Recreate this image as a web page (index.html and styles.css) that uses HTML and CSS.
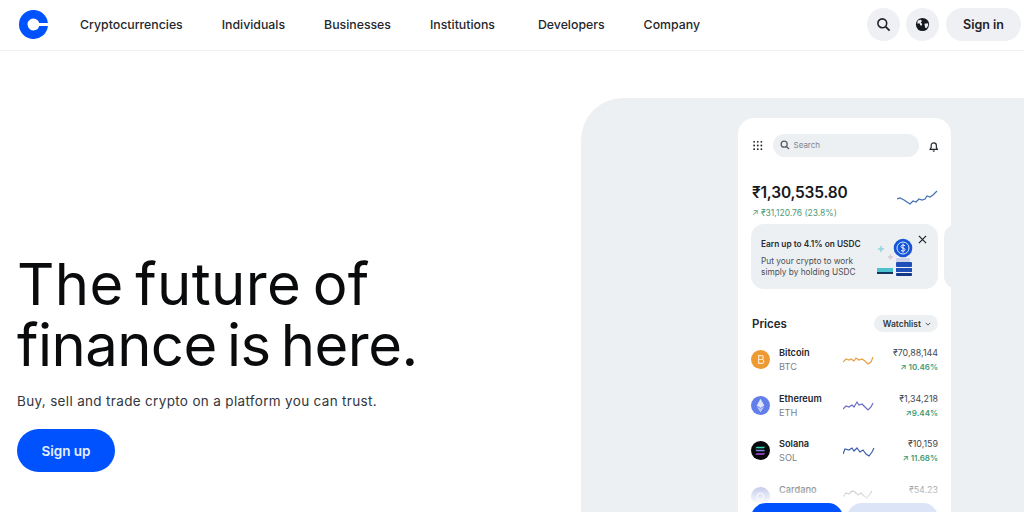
FILE: index.html
```html
<!DOCTYPE html>
<html lang="en">
<head>
    <meta charset="UTF-8">
    <meta name="viewport" content="width=device-width, initial-scale=1.0">
    <title>Coinbase</title>
    <link rel="stylesheet" href="styles.css">
</head>
<body>
    <header class="topbar">
        <svg class="logo" viewBox="0 0 30 30" width="29" height="29">
            <path fill="#0052ff" fill-rule="evenodd" d="M15 0a15 15 0 1 0 14.92 16.5H21a6.2 6.2 0 1 1 0-3h8.92A15 15 0 0 0 15 0z"/>
        </svg>
        <nav class="nav">
            <a class="nav-link">Cryptocurrencies</a>
            <a class="nav-link">Individuals</a>
            <a class="nav-link">Businesses</a>
            <a class="nav-link nav-institutions">Institutions</a>
            <a class="nav-link">Developers</a>
            <a class="nav-link">Company</a>
        </nav>
        <div class="top-actions">
            <button class="round-btn" aria-label="Search">
                <svg viewBox="0 0 16 16" width="15" height="15"><circle cx="6.7" cy="6.7" r="4.7" fill="none" stroke="#1f2329" stroke-width="1.7"/><path d="M10.2 10.2l4.3 4.3" stroke="#1f2329" stroke-width="1.9"/></svg>
            </button>
            <button class="round-btn" aria-label="Language">
                <svg viewBox="0 0 16 16" width="15" height="15"><circle cx="8" cy="8" r="7" fill="#16191f"/><path fill="#eef0f3" d="M3 3.8l3.4-1 1 1.6-1.3 1.5 1.6 1.5-.8 2-1.4-.6-.3-1.9L2.4 7zM10 7.2l3.6-.6.6 2.3-2 3.2-1.3-.6z"/></svg>
            </button>
            <button class="signin-btn">Sign in</button>
        </div>
    </header>

    <main class="hero">
        <section class="hero-copy">
            <h1 class="headline"><span class="line-one">The future of</span><span class="line-two">finance is here.</span></h1>
            <p class="tagline">Buy, sell and trade crypto on a platform you can trust.</p>
            <button class="signup-btn">Sign up</button>
        </section>

        <section class="hero-panel">
            <div class="phone">
                <div class="phone-top">
                    <svg class="grid-icon" viewBox="0 0 11 11" width="11" height="11" fill="#22262c">
                        <circle cx="1.3" cy="1.3" r="1.1"/><circle cx="5.5" cy="1.3" r="1.1"/><circle cx="9.7" cy="1.3" r="1.1"/>
                        <circle cx="1.3" cy="5.5" r="1.1"/><circle cx="5.5" cy="5.5" r="1.1"/><circle cx="9.7" cy="5.5" r="1.1"/>
                        <circle cx="1.3" cy="9.7" r="1.1"/><circle cx="5.5" cy="9.7" r="1.1"/><circle cx="9.7" cy="9.7" r="1.1"/>
                    </svg>
                    <div class="search-box">
                        <svg viewBox="0 0 12 12" width="10" height="10"><circle cx="5" cy="5" r="3.6" fill="none" stroke="#555b65" stroke-width="1.5"/><path d="M7.7 7.7l3.2 3.2" stroke="#555b65" stroke-width="1.6"/></svg>
                        <span>Search</span>
                    </div>
                    <svg class="bell" viewBox="0 0 12 13" width="11" height="12"><path d="M6 1.2a3.3 3.3 0 0 0-3.3 3.3v2.7L1.4 9.6h9.2L9.3 7.2V4.500A3.300 3.300 0 0 0 6 1.200z" fill="none" stroke="#22262c" stroke-width="1.500"/><path d="M4.500 11h3a1.500 1.500 0 0 1-3 0z" fill="#22262c"/></svg>
                </div>

                <div class="balance-row">
                    <div>
                        <div class="balance">₹1,30,535.80</div>
                        <div class="gain">↗ ₹31,120.76 (23.8%)</div>
                    </div>
                    <svg class="balance-chart" viewBox="0 0 42 20" width="42" height="20"><path d="M0 11l3-1 4 2 3 2 3 2 3-3 3 1 3-3 3 1 3-1 2-3 3 1 3-2 4-4" fill="none" stroke="#3f6fb5" stroke-width="1.200"/></svg>
                </div>

                <div class="promo-wrap">
                    <div class="promo">
                        <div class="promo-text">
                            <div class="promo-title">Earn up to 4.1% on USDC</div>
                            <div class="promo-sub">Put your crypto to work<br>simply by holding USDC</div>
                        </div>
                        <svg class="promo-art" viewBox="0 0 46 44" width="46" height="44">
                            <path d="M5 11h6M8 8v6" stroke="#8fd6e0" stroke-width="1.500"/>
                            <path d="M15 19h5M17.500 16.500v5" stroke="#d9c8cc" stroke-width="1.300"/>
                            <circle cx="30" cy="10" r="9.300" fill="#1656d6"/>
                            <circle cx="30" cy="10" r="6" fill="none" stroke="#dbe8ff" stroke-width="1"/>
                            <path d="M32 7.800c-1-1-4-1-4 .8s4 1 4 3-3 1.800-4 .7M30 5.500v9" fill="none" stroke="#fff" stroke-width=".9"/>
                            <rect x="23" y="20" width="14" height="4" fill="#cfd6ea"/>
                            <rect x="4" y="30" width="16" height="4" fill="#4cc3cf"/>
                            <rect x="4" y="34" width="16" height="2" fill="#12365f"/>
                            <rect x="23" y="24" width="16" height="5" rx="1" fill="#1e4fb8"/>
                            <rect x="23" y="30" width="16" height="4" fill="#1e4fb8"/>
                            <rect x="23" y="35" width="16" height="3" rx="1" fill="#14378a"/>
                        </svg>
                        <svg class="promo-close" viewBox="0 0 10 10" width="9" height="9"><path d="M1 1l8 8M9 1l-8 8" stroke="#1c1f25" stroke-width="1.300"/></svg>
                    </div>
                    <div class="promo-next"></div>
                </div>

                <div class="prices-head">
                    <span class="prices-title">Prices</span>
                    <span class="watchlist">Watchlist
                        <svg viewBox="0 0 8 5" width="6" height="4"><path d="M1 1l3 3 3-3" fill="none" stroke="#333" stroke-width="1.100"/></svg>
                    </span>
                </div>

                <div class="coin-row">
                    <svg class="coin-icon" viewBox="0 0 20 20" width="19" height="19"><circle cx="10" cy="10" r="10" fill="#ee9a33"/><path d="M8 6h3a2 2 0 0 1 0 4H8zm0 4h3.500a2 2 0 0 1 0 4H8z" fill="none" stroke="#fbe3c2" stroke-width="1.300"/></svg>
                    <div class="coin-name"><b>Bitcoin</b><span>BTC</span></div>
                    <svg class="spark" viewBox="0 0 32 12" width="32" height="12"><path d="M0 8l3-3 3 1 2-1 3 2 2-3 3 2 3-1 3 2 3 3 3-2 2-5" fill="none" stroke="#e7a040" stroke-width="1.200"/></svg>
                    <div class="coin-price"><span>₹70,88,144</span><em>↗ 10.46%</em></div>
                </div>
                <div class="coin-row">
                    <svg class="coin-icon" viewBox="0 0 20 20" width="19" height="19"><circle cx="10" cy="10" r="10" fill="#627eea"/><path d="M10 3l4 7-4 2.500L6 10z" fill="#dfe5fb"/><path d="M10 13.500l4-2.500-4 6-4-6z" fill="#c3cef6"/></svg>
                    <div class="coin-name"><b>Ethereum</b><span>ETH</span></div>
                    <svg class="spark" viewBox="0 0 32 12" width="32" height="12"><path d="M0 10l3-3 3 1 3-2 2 2 3-5 2 3 3-1 3 3 3 3 3-3 2-4" fill="none" stroke="#6a6cc6" stroke-width="1.200"/></svg>
                    <div class="coin-price"><span>₹1,34,218</span><em>↗9.44%</em></div>
                </div>
                <div class="coin-row">
                    <svg class="coin-icon" viewBox="0 0 20 20" width="19" height="19"><circle cx="10" cy="10" r="10" fill="#08090c"/><path d="M6 6h9l-1.500 1.500h-9z" fill="#35d6b0"/><path d="M4.500 9.300h9l1.500 1.500H6z" fill="#7a8be0"/><path d="M6 13h9l-1.500 1.500h-9z" fill="#b04be8"/></svg>
                    <div class="coin-name"><b>Solana</b><span>SOL</span></div>
                    <svg class="spark" viewBox="0 0 32 12" width="32" height="12"><path d="M0 9l2-5 4 1 3-2 2 3 3-3 3 4 3-2 3 4 3 2 3-4 2-4" fill="none" stroke="#3c5ea8" stroke-width="1.200"/></svg>
                    <div class="coin-price"><span>₹10,159</span><em>↗ 11.68%</em></div>
                </div>
                <div class="coin-row coin-last">
                    <svg class="coin-icon" viewBox="0 0 20 20" width="19" height="19"><circle cx="10" cy="10" r="10" fill="#8b9ad8"/><circle cx="10" cy="10" r="3.500" fill="none" stroke="#dfe4f7" stroke-width="1.200"/></svg>
                    <div class="coin-name"><b>Cardano</b></div>
                    <svg class="spark" viewBox="0 0 32 12" width="32" height="12"><path d="M0 10l3-4 3 1 3-3 3 1 3 3 3-2 3 3 3 2 3-4 2-3" fill="none" stroke="#777" stroke-width="1.100"/></svg>
                    <div class="coin-price"><span>₹54.23</span></div>
                </div>

                <div class="phone-fade"></div>
                <div class="phone-actions">
                    <button class="action-btn action-primary">Buy &amp; sell</button>
                    <button class="action-btn action-light">Transfer</button>
                </div>
            </div>
        </section>
    </main>
</body>
</html>
```

FILE: styles.css
```css
* {
    box-sizing: border-box;
}

html, body {
    margin: 0;
    height: 100%;
}

body {
    font-family: Inter, "Liberation Sans", sans-serif;
    background-color: #fff;
    color: #0a0b0d;
    overflow: hidden;
}

button {
    font-family: inherit;
    border: none;
    cursor: pointer;
}

.topbar {
    display: flex;
    align-items: center;
    height: 51px;
    padding: 0 3px 2px 19px;
    border-bottom: 1px solid #f1f2f4;
}

.logo {
    margin-right: 32px;
}

.nav {
    display: flex;
    flex: 1;
    gap: 39px;
}

.nav-link {
    font-size: 12.3px;
    font-weight: 500;
    color: #24272d;
}

.nav-institutions {
    margin-right: 4px;
}

.top-actions {
    display: flex;
    align-items: center;
    gap: 6px;
}

.round-btn {
    display: flex;
    align-items: center;
    justify-content: center;
    width: 33px;
    height: 33px;
    padding: 0;
    border-radius: 50%;
    background-color: #eef0f3;
}

.signin-btn {
    width: 75px;
    height: 33px;
    margin-left: 1px;
    border-radius: 17px;
    background-color: #eef0f3;
    color: #1f2329;
    font-size: 12.5px;
    font-weight: 600;
}

.hero {
    display: flex;
    height: 461px;
}

.hero-copy {
    width: 581px;
    padding: 203px 0 0 17px;
}

.headline {
    margin: 0;
    font-size: 58px;
    font-weight: 400;
    line-height: 61px;
    color: #0a0b0d;
}

.line-one,
.line-two {
    display: block;
    white-space: nowrap;
}

.line-one {
    letter-spacing: .35px;
    word-spacing: -5px;
}

.line-two {
    letter-spacing: -.55px;
    word-spacing: -5.5px;
}

.tagline {
    margin: 15px 0 0;
    font-size: 13.5px;
    line-height: 20px;
    color: #33363d;
    letter-spacing: .33px;
}

.signup-btn {
    display: block;
    width: 98px;
    height: 43px;
    margin-top: 18px;
    border-radius: 22px;
    background-color: #0052ff;
    color: #e8efff;
    font-size: 13.5px;
    font-weight: 600;
}

.hero-panel {
    flex: 1;
    margin-top: 47px;
    padding: 20px 73px 0 157px;
    background-color: #edf0f2;
    border-top-left-radius: 42px;
    overflow: hidden;
}

.phone {
    position: relative;
    height: 420px;
    padding: 0 13px;
    background-color: #fff;
    border-radius: 16px 16px 0 0;
    overflow: hidden;
}

.phone-top {
    display: flex;
    align-items: center;
    height: 54px;
}

.grid-icon {
    margin: 0 10px 0 2px;
}

.search-box {
    display: flex;
    flex: none;
    align-items: center;
    gap: 4px;
    width: 146px;
    height: 23px;
    padding-left: 7px;
    border-radius: 12px;
    background-color: #edf0f2;
    font-size: 8px;
    color: #80858e;
}

.bell {
    margin: 4px 0 0 10px;
}

.balance-row {
    display: flex;
    align-items: flex-start;
    justify-content: space-between;
    padding: 10px 0 0 1px;
}

.balance {
    font-size: 15.5px;
    font-weight: 600;
    line-height: 22px;
    letter-spacing: -.2px;
    color: #17191e;
}

.gain {
    margin-top: 3px;
    font-size: 8.5px;
    line-height: 12px;
    color: #4c9a78;
}

.balance-chart {
    margin: 6px -1px 0 0;
}

.promo-wrap {
    display: flex;
    gap: 6px;
    width: 220px;
    margin-top: 5px;
}

.promo {
    position: relative;
    display: flex;
    flex: none;
    justify-content: space-between;
    width: 187px;
    height: 65px;
    padding: 15px 10px 0 10px;
    border-radius: 13px;
    background-color: #edf0f2;
}

.promo-next {
    flex: none;
    width: 20px;
    height: 65px;
    border-radius: 13px 0 0 13px;
    background-color: #edf0f2;
}

.promo-title {
    font-size: 8.3px;
    font-weight: 600;
    line-height: 10px;
    color: #2a2d33;
}

.promo-sub {
    margin-top: 7px;
    font-size: 8.3px;
    line-height: 11px;
    color: #4a4e56;
}

.promo-art {
    flex: none;
    margin: -1px 9px 0 -20px;
}

.promo-close {
    position: absolute;
    top: 11px;
    right: 11px;
}

.prices-head {
    display: flex;
    align-items: center;
    justify-content: space-between;
    margin-top: 26px;
    padding-left: 1px;
}

.prices-title {
    font-size: 11.5px;
    font-weight: 600;
    color: #26292f;
}

.watchlist {
    display: flex;
    align-items: center;
    gap: 4px;
    height: 17px;
    padding: 0 7px 0 9px;
    border-radius: 9px;
    background-color: #edf0f2;
    font-size: 8.5px;
    font-weight: 600;
    color: #33363c;
}

.coin-row {
    display: flex;
    align-items: center;
    height: 45.5px;
}

.prices-head + .coin-row {
    margin-top: 5px;
}

.coin-icon {
    flex: none;
}

.coin-name {
    display: flex;
    flex-direction: column;
    gap: 3px;
    width: 65px;
    margin-left: 9px;
    font-size: 9.2px;
}

.coin-name b {
    font-weight: 600;
    color: #24272d;
}

.coin-name span {
    color: #7c818a;
}

.spark {
    flex: none;
    margin-left: -1px;
}

.coin-price {
    display: flex;
    flex: 1;
    flex-direction: column;
    align-items: flex-end;
    gap: 4px;
    font-size: 8.9px;
    color: #44484f;
}

.coin-price em {
    font-style: normal;
    font-weight: 600;
    font-size: 8px;
    color: #3f9c74;
}

/* last coin row disappears under the buttons */
.coin-last {
    align-items: flex-start;
    padding-top: 10px;
}

.coin-last .coin-icon,
.coin-last .spark {
    margin-top: 3px;
}

.phone-fade {
    position: absolute;
    left: 0;
    right: 0;
    top: 352px;
    height: 68px;
    background: linear-gradient(rgba(255, 255, 255, 0), #fff 50%);
}

.phone-actions {
    position: absolute;
    left: 13px;
    right: 13px;
    top: 385px;
    display: flex;
    gap: 4px;
}

.action-btn {
    flex: 1;
    height: 30px;
    border-radius: 15px;
    font-size: 8.5px;
    font-weight: 600;
}

.action-primary {
    background-color: #0052ff;
    color: #fff;
}

.action-light {
    background-color: #dbe5f7;
    color: #333;
}
```
